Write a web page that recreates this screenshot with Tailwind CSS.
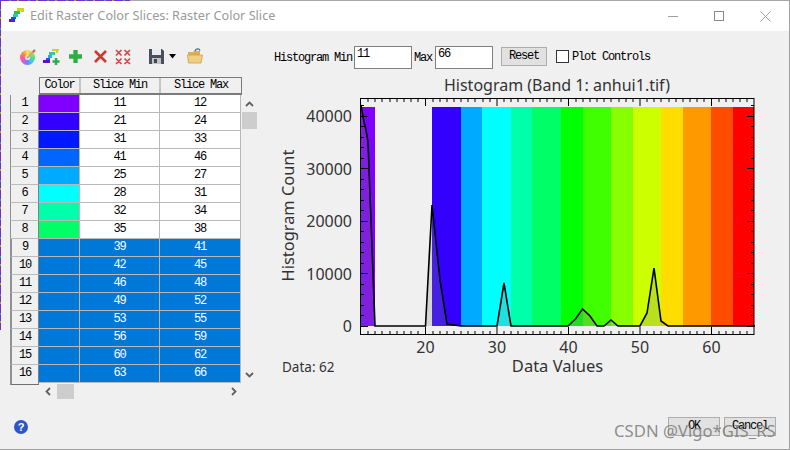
<!DOCTYPE html>
<html>
<head>
<meta charset="utf-8">
<script src="https://cdn.jsdelivr.net/npm/@tailwindcss/browser@4"></script>
</head>
<body class="bg-[#f0f0f0]">
<div class="relative w-[790px] h-[450px] overflow-hidden bg-[#f0f0f0] border-r border-b border-[#a0a0a0] flex flex-col font-['Liberation_Mono',monospace] text-[12px] tracking-[-1.2px] text-black">
  <!-- desktop showing at the window edges -->
  <div class="absolute left-0 top-0 w-px h-[330px] bg-[repeating-linear-gradient(180deg,#7a2bd0_0,#7a2bd0_9px,#3aa0a0_9px,#3aa0a0_11px,#7a2bd0_11px,#7a2bd0_17px,#9ab030_17px,#9ab030_19px)]"></div>
  <div class="absolute left-0 top-0 w-[130px] h-px bg-[repeating-linear-gradient(90deg,#7a2bd0_0,#7a2bd0_9px,#3aa0a0_9px,#3aa0a0_11px,#7a2bd0_11px,#7a2bd0_17px,#9ab030_17px,#9ab030_19px)]"></div>

  <!-- title bar -->
  <div class="h-[31px] shrink-0 bg-white flex items-center pl-[9px] border-t border-[#a8a8a8]">
    <svg width="16" height="16" viewBox="0 0 16 16" class="shrink-0">
      <rect x="8" y="0" width="7" height="3" fill="#c8d820"/><rect x="12" y="2" width="3" height="2" fill="#c8d820"/>
      <rect x="5" y="3" width="6" height="3" fill="#30c040"/>
      <rect x="4" y="6" width="5" height="3" fill="#20c8d8"/>
      <rect x="2" y="9" width="5" height="2" fill="#1850e8"/>
      <rect x="0" y="11" width="6" height="3" fill="#7010d0"/>
    </svg>
    <span class="ml-[5px] font-['Noto_Sans',sans-serif] text-[12.7px] tracking-normal text-[#9a9a9a] whitespace-nowrap">Edit Raster Color Slices: Raster Color Slice</span>
    <div class="ml-auto flex items-center pr-[18px] gap-[35px]">
      <svg width="11" height="11" viewBox="0 0 11 11"><path d="M0 5.5H10" stroke="#a0a0a0" fill="none"/></svg>
      <svg width="11" height="11" viewBox="0 0 11 11"><rect x="0.5" y="0.5" width="9" height="9" stroke="#8a8a8a" fill="none"/></svg>
      <svg width="11" height="11" viewBox="0 0 11 11"><path d="M0.5 0.5L10.5 10.5M10.5 0.5L0.5 10.5" stroke="#a0a0a0" fill="none"/></svg>
    </div>
  </div>

  <div class="flex flex-1 min-h-0">
    <!-- left column -->
    <div class="w-[270px] shrink-0 flex flex-col">
      <!-- toolbar -->
      <div class="h-[46px] shrink-0 flex items-start pt-[18px] pl-[20px]">
        <div class="relative w-[16px] h-[16px]">
          <div class="w-[15px] h-[15px] mt-[1px] rounded-full bg-[conic-gradient(#f8e060,#b0e850,#50e080,#40c8f0,#7080f8,#d060e0,#f86090,#f89040,#f8e060)]"></div>
          <div class="absolute left-[5px] top-[6px] w-[5px] h-[5px] rounded-full bg-white/80"></div>
          <svg class="absolute left-0 top-0" width="17" height="16" viewBox="0 0 17 16"><path d="M7 9L14 2" stroke="#d8a070" stroke-width="1.8" fill="none"/><path d="M13 3L15 1" stroke="#e05050" stroke-width="2" fill="none"/></svg>
        </div>
        <svg class="ml-[7px]" width="18" height="17" viewBox="0 0 18 17">
          <rect x="9" y="0" width="7" height="2" fill="#c8d820"/><rect x="13" y="1" width="2" height="3" fill="#c8d820"/>
          <rect x="6" y="3" width="6" height="3" fill="#30c8a0"/>
          <rect x="5" y="6" width="4" height="3" fill="#20b0e8"/>
          <rect x="3" y="9" width="4" height="2" fill="#1850e8"/>
          <rect x="0" y="11" width="7" height="3" fill="#6010c0"/>
          <path d="M13 9V16M9.5 12.5H16.5" stroke="#30a850" stroke-width="2.4" fill="none"/>
        </svg>
        <svg class="ml-[7px]" width="15" height="15" viewBox="0 0 15 15"><path d="M7.5 1V14M1 7.5H14" stroke="#2fae46" stroke-width="4.4" fill="none"/></svg>
        <svg class="ml-[10px]" width="15" height="15" viewBox="0 0 15 15"><path d="M2 2L13 13M13 2L2 13" stroke="#c83a34" stroke-width="2.6" fill="none"/></svg>
        <svg class="ml-[7px]" width="16" height="16" viewBox="0 0 16 16"><path d="M1 1L6.5 6.5M6.5 1L1 6.5M9.5 1L15 6.5M15 1L9.5 6.5M1 9.5L6.5 15M6.5 9.5L1 15M9.5 9.5L15 15M15 9.5L9.5 15" stroke="#d04848" stroke-width="1.7" fill="none"/></svg>
        <svg class="ml-[18px]" width="15" height="15" viewBox="0 0 15 15"><path d="M0 0H13L15 2V15H0Z" fill="#4a4f5c"/><rect x="3" y="0" width="9" height="6" fill="#e8ecf0"/><rect x="3" y="9" width="9" height="6" fill="#c0c4c8"/><rect x="5" y="10" width="3" height="4" fill="#40444c"/></svg>
        <svg class="ml-[5px] mt-[5px]" width="8" height="5" viewBox="0 0 8 5"><path d="M0 0H7L3.5 4.5Z" fill="#000"/></svg>
        <svg class="ml-[10px] -mt-[1px]" width="16" height="16" viewBox="0 0 16 16"><path d="M1 4H6L7 3H13V15H1Z" fill="#d8b058"/><path d="M0.5 7H15.5L14 15H1.5Z" fill="#f0d080" stroke="#c8a050" stroke-width=".8"/><path d="M8 3C9 0.5 12 0 13 2.5" stroke="#4a6a90" stroke-width="1.4" fill="none"/></svg>
      </div>

      <!-- table + vertical scrollbar -->
      <div class="flex">
        <div class="w-[242px] shrink-0">
          <!-- header -->
          <div class="ml-[39px] flex h-[18px] border-t border-l border-b-2 border-r border-[#7a7a7a] text-center leading-[15px] bg-[#f0f0f0]">
            <div class="w-[41px] border-r-2 border-[#c4c4c4]">Color</div>
            <div class="w-[80px] border-r-2 border-[#c4c4c4]">Slice Min</div>
            <div class="flex-1">Slice Max</div>
          </div>
          <!-- rows -->
          <div class="flex h-[18px] leading-[16px] text-center"><div class="ml-[10px] w-[29px] bg-[#f0f0f0] border-l border-l-[#909090] border-b border-b-[#bcbcbc] border-r border-r-[#808080]">1</div><div class="w-[41px] bg-[#8000ff] border-b border-r border-[#b8b8b8]"></div><div class="w-[80px] bg-white border-b border-r border-[#b8b8b8]">11</div><div class="w-[81px] bg-white border-b border-r border-[#b8b8b8]">12</div></div>
          <div class="flex h-[18px] leading-[16px] text-center"><div class="ml-[10px] w-[29px] bg-[#f0f0f0] border-l border-l-[#909090] border-b border-b-[#bcbcbc] border-r border-r-[#808080]">2</div><div class="w-[41px] bg-[#3300ff] border-b border-r border-[#b8b8b8]"></div><div class="w-[80px] bg-white border-b border-r border-[#b8b8b8]">21</div><div class="w-[81px] bg-white border-b border-r border-[#b8b8b8]">24</div></div>
          <div class="flex h-[18px] leading-[16px] text-center"><div class="ml-[10px] w-[29px] bg-[#f0f0f0] border-l border-l-[#909090] border-b border-b-[#bcbcbc] border-r border-r-[#808080]">3</div><div class="w-[41px] bg-[#0019ff] border-b border-r border-[#b8b8b8]"></div><div class="w-[80px] bg-white border-b border-r border-[#b8b8b8]">31</div><div class="w-[81px] bg-white border-b border-r border-[#b8b8b8]">33</div></div>
          <div class="flex h-[18px] leading-[16px] text-center"><div class="ml-[10px] w-[29px] bg-[#f0f0f0] border-l border-l-[#909090] border-b border-b-[#bcbcbc] border-r border-r-[#808080]">4</div><div class="w-[41px] bg-[#0066ff] border-b border-r border-[#b8b8b8]"></div><div class="w-[80px] bg-white border-b border-r border-[#b8b8b8]">41</div><div class="w-[81px] bg-white border-b border-r border-[#b8b8b8]">46</div></div>
          <div class="flex h-[18px] leading-[16px] text-center"><div class="ml-[10px] w-[29px] bg-[#f0f0f0] border-l border-l-[#909090] border-b border-b-[#bcbcbc] border-r border-r-[#808080]">5</div><div class="w-[41px] bg-[#00aaff] border-b border-r border-[#b8b8b8]"></div><div class="w-[80px] bg-white border-b border-r border-[#b8b8b8]">25</div><div class="w-[81px] bg-white border-b border-r border-[#b8b8b8]">27</div></div>
          <div class="flex h-[18px] leading-[16px] text-center"><div class="ml-[10px] w-[29px] bg-[#f0f0f0] border-l border-l-[#909090] border-b border-b-[#bcbcbc] border-r border-r-[#808080]">6</div><div class="w-[41px] bg-[#00ffff] border-b border-r border-[#b8b8b8]"></div><div class="w-[80px] bg-white border-b border-r border-[#b8b8b8]">28</div><div class="w-[81px] bg-white border-b border-r border-[#b8b8b8]">31</div></div>
          <div class="flex h-[18px] leading-[16px] text-center"><div class="ml-[10px] w-[29px] bg-[#f0f0f0] border-l border-l-[#909090] border-b border-b-[#bcbcbc] border-r border-r-[#808080]">7</div><div class="w-[41px] bg-[#00ffaa] border-b border-r border-[#b8b8b8]"></div><div class="w-[80px] bg-white border-b border-r border-[#b8b8b8]">32</div><div class="w-[81px] bg-white border-b border-r border-[#b8b8b8]">34</div></div>
          <div class="flex h-[18px] leading-[16px] text-center"><div class="ml-[10px] w-[29px] bg-[#f0f0f0] border-l border-l-[#909090] border-b border-b-[#bcbcbc] border-r border-r-[#808080]">8</div><div class="w-[41px] bg-[#00ff66] border-b border-r border-[#b8b8b8]"></div><div class="w-[80px] bg-white border-b border-r border-[#b8b8b8]">35</div><div class="w-[81px] bg-white border-b border-r border-[#b8b8b8]">38</div></div>
          <div class="flex h-[18px] leading-[16px] text-center text-white"><div class="ml-[10px] w-[29px] bg-[#f0f0f0] border-l-2 border-l-[#909090] border-b border-b-[#bcbcbc] border-r border-r-[#808080] text-black">9</div><div class="w-[41px] bg-[#0078d7] border-b border-r border-[#b8b8b8]"></div><div class="w-[80px] bg-[#0078d7] border-b border-r border-[#b8b8b8]">39</div><div class="w-[81px] bg-[#0078d7] border-b border-r border-[#b8b8b8]">41</div></div>
          <div class="flex h-[18px] leading-[16px] text-center text-white"><div class="ml-[10px] w-[29px] bg-[#f0f0f0] border-l-2 border-l-[#909090] border-b border-b-[#bcbcbc] border-r border-r-[#808080] text-black">10</div><div class="w-[41px] bg-[#0078d7] border-b border-r border-[#b8b8b8]"></div><div class="w-[80px] bg-[#0078d7] border-b border-r border-[#b8b8b8]">42</div><div class="w-[81px] bg-[#0078d7] border-b border-r border-[#b8b8b8]">45</div></div>
          <div class="flex h-[18px] leading-[16px] text-center text-white"><div class="ml-[10px] w-[29px] bg-[#f0f0f0] border-l-2 border-l-[#909090] border-b border-b-[#bcbcbc] border-r border-r-[#808080] text-black">11</div><div class="w-[41px] bg-[#0078d7] border-b border-r border-[#b8b8b8]"></div><div class="w-[80px] bg-[#0078d7] border-b border-r border-[#b8b8b8]">46</div><div class="w-[81px] bg-[#0078d7] border-b border-r border-[#b8b8b8]">48</div></div>
          <div class="flex h-[18px] leading-[16px] text-center text-white"><div class="ml-[10px] w-[29px] bg-[#f0f0f0] border-l-2 border-l-[#909090] border-b border-b-[#bcbcbc] border-r border-r-[#808080] text-black">12</div><div class="w-[41px] bg-[#0078d7] border-b border-r border-[#b8b8b8]"></div><div class="w-[80px] bg-[#0078d7] border-b border-r border-[#b8b8b8]">49</div><div class="w-[81px] bg-[#0078d7] border-b border-r border-[#b8b8b8]">52</div></div>
          <div class="flex h-[18px] leading-[16px] text-center text-white"><div class="ml-[10px] w-[29px] bg-[#f0f0f0] border-l-2 border-l-[#909090] border-b border-b-[#bcbcbc] border-r border-r-[#808080] text-black">13</div><div class="w-[41px] bg-[#0078d7] border-b border-r border-[#b8b8b8]"></div><div class="w-[80px] bg-[#0078d7] border-b border-r border-[#b8b8b8]">53</div><div class="w-[81px] bg-[#0078d7] border-b border-r border-[#b8b8b8]">55</div></div>
          <div class="flex h-[18px] leading-[16px] text-center text-white"><div class="ml-[10px] w-[29px] bg-[#f0f0f0] border-l-2 border-l-[#909090] border-b border-b-[#bcbcbc] border-r border-r-[#808080] text-black">14</div><div class="w-[41px] bg-[#0078d7] border-b border-r border-[#b8b8b8]"></div><div class="w-[80px] bg-[#0078d7] border-b border-r border-[#b8b8b8]">56</div><div class="w-[81px] bg-[#0078d7] border-b border-r border-[#b8b8b8]">59</div></div>
          <div class="flex h-[18px] leading-[16px] text-center text-white"><div class="ml-[10px] w-[29px] bg-[#f0f0f0] border-l-2 border-l-[#909090] border-b border-b-[#bcbcbc] border-r border-r-[#808080] text-black">15</div><div class="w-[41px] bg-[#0078d7] border-b border-r border-[#b8b8b8]"></div><div class="w-[80px] bg-[#0078d7] border-b border-r border-[#b8b8b8]">60</div><div class="w-[81px] bg-[#0078d7] border-b border-r border-[#b8b8b8]">62</div></div>
          <div class="flex h-[18px] leading-[16px] text-center text-white"><div class="ml-[10px] w-[29px] h-[20px] bg-[#f0f0f0] border-l-2 border-l-[#909090] border-b border-b-[#707070] border-r border-r-[#808080] text-black">16</div><div class="w-[41px] bg-[#0078d7] border-b border-r border-[#b8b8b8]"></div><div class="w-[80px] bg-[#0078d7] border-b border-r border-[#b8b8b8]">63</div><div class="w-[81px] bg-[#0078d7] border-b border-r border-[#b8b8b8]">66</div></div>
        </div>
        <!-- vertical scrollbar -->
        <div class="w-[15px] mt-[18px] flex flex-col items-center">
          <div class="h-[17px] flex items-center"><svg width="9" height="6" viewBox="0 0 9 6"><path d="M1 5L4.5 1.5L8 5" stroke="#606060" stroke-width="1.8" fill="none"/></svg></div>
          <div class="w-[15px] h-[17px] bg-[#cdcdcd]"></div>
          <div class="flex-1"></div>
          <div class="h-[17px] flex items-center"><svg width="9" height="6" viewBox="0 0 9 6"><path d="M1 1L4.5 4.5L8 1" stroke="#606060" stroke-width="1.8" fill="none"/></svg></div>
        </div>
      </div>
      <!-- horizontal scrollbar -->
      <div class="ml-[45px] w-[192px] h-[15px] mt-[1px] flex items-center">
        <svg width="6" height="9" viewBox="0 0 6 9"><path d="M5 1L1.5 4.5L5 8" stroke="#606060" stroke-width="1.8" fill="none"/></svg>
        <div class="ml-[6px] w-[17px] h-[15px] bg-[#cdcdcd]"></div>
        <div class="flex-1"></div>
        <svg width="6" height="9" viewBox="0 0 6 9"><path d="M1 1L4.5 4.5L1 8" stroke="#606060" stroke-width="1.8" fill="none"/></svg>
      </div>
      <!-- help -->
      <div class="ml-[14px] mt-[21px] w-[14px] h-[14px] rounded-full bg-[#2d55c8] flex items-center justify-center font-['Liberation_Sans',sans-serif] font-bold text-[11px] tracking-normal text-white">?</div>
    </div>

    <!-- right column -->
    <div class="flex-1 flex flex-col min-w-0">
      <div class="h-[23px] mt-[15px] shrink-0 flex items-center pl-[4px] whitespace-nowrap">
        <span>Histogram Min</span>
        <div class="ml-[2px] w-[58px] h-[23px] bg-white border border-[#808080] pl-[2px] leading-[15px]">11</div>
        <span class="ml-[2px]">Max</span>
        <div class="ml-[3px] w-[58px] h-[23px] bg-white border border-[#808080] pl-[2px] leading-[15px]">66</div>
        <div class="ml-[8px] w-[46px] h-[19px] -mt-[3px] bg-[#e1e1e1] border border-[#adadad] text-center leading-[16px]">Reset</div>
        <div class="ml-[9px] w-[13px] h-[13px] -mt-[2px] bg-white border border-[#333]"></div>
        <span class="ml-[3px] -mt-[2px]">Plot Controls</span>
      </div>
      <svg width="520" height="315" viewBox="270 70 520 315" class="mt-[1px] shrink-0 block font-['Noto_Sans',sans-serif] tracking-normal">
        <!-- bands -->
        <rect x="361" y="107" width="14" height="219" fill="#8000ff"/>
        <rect x="432" y="107" width="29" height="219" fill="#3300ff"/>
        <rect x="461" y="107" width="21" height="219" fill="#00aaff"/>
        <rect x="482" y="107" width="29" height="219" fill="#00ffff"/>
        <rect x="511" y="107" width="21" height="219" fill="#00ffaa"/>
        <rect x="532" y="107" width="29" height="219" fill="#00ff66"/>
        <rect x="561" y="107" width="22" height="219" fill="#00ff00"/>
        <rect x="583" y="107" width="28" height="219" fill="#40ff00"/>
        <rect x="611" y="107" width="22" height="219" fill="#88ff00"/>
        <rect x="633" y="107" width="28" height="219" fill="#ccff00"/>
        <rect x="661" y="107" width="22" height="219" fill="#ffdd00"/>
        <rect x="683" y="107" width="28" height="219" fill="#ff9900"/>
        <rect x="711" y="107" width="22" height="219" fill="#ff4c00"/>
        <rect x="733" y="107" width="21" height="219" fill="#ff0000"/>
        <!-- histogram -->
        <path d="M361 326V105L364 122L366 130L368 142L375 326H425.5L432 205L440 280L447 324L454 325L461 326H497L504 283L511 326H568L575.5 319L582.5 309L590 316L597 326H604L611 320L618 326H640L647 313L654 268L661 321L668 326Z" fill="#808080" fill-opacity=".25" stroke="none"/>
        <path d="M361 105L364 122L366 130L368 142L375 326H425.5L432 205L440 280L447 324L454 325L461 326H497L504 283L511 326H568L575.5 319L582.5 309L590 316L597 326H604L611 320L618 326H640L647 313L654 268L661 321L668 326H755" fill="none" stroke="#000" stroke-width="1.6"/>
        <!-- frame -->
        <rect x="360.5" y="98.5" width="393.5" height="236" fill="none" stroke="#000"/>
        <!-- major x ticks -->
        <path d="M425.5 99v7M497 99v7M568.5 99v7M640 99v7M711.5 99v7M425.5 334v-7M497 334v-7M568.5 334v-7M640 334v-7M711.5 334v-7" stroke="#000" fill="none"/>
        <!-- minor x ticks -->
        <path d="M368 99v3M375 99v3M382 99v3M390 99v3M397 99v3M404 99v3M411 99v3M418 99v3M433 99v3M440 99v3M447 99v3M454 99v3M461 99v3M468 99v3M475 99v3M483 99v3M490 99v3M504 99v3M511 99v3M518 99v3M526 99v3M533 99v3M540 99v3M547 99v3M554 99v3M561 99v3M576 99v3M583 99v3M590 99v3M597 99v3M604 99v3M611 99v3M619 99v3M626 99v3M633 99v3M647 99v3M654 99v3M661 99v3M669 99v3M676 99v3M683 99v3M690 99v3M697 99v3M704 99v3M719 99v3M726 99v3M733 99v3M740 99v3M747 99v3M368 334v-3M375 334v-3M382 334v-3M390 334v-3M397 334v-3M404 334v-3M411 334v-3M418 334v-3M433 334v-3M440 334v-3M447 334v-3M454 334v-3M461 334v-3M468 334v-3M475 334v-3M483 334v-3M490 334v-3M504 334v-3M511 334v-3M518 334v-3M526 334v-3M533 334v-3M540 334v-3M547 334v-3M554 334v-3M561 334v-3M576 334v-3M583 334v-3M590 334v-3M597 334v-3M604 334v-3M611 334v-3M619 334v-3M626 334v-3M633 334v-3M647 334v-3M654 334v-3M661 334v-3M669 334v-3M676 334v-3M683 334v-3M690 334v-3M697 334v-3M704 334v-3M719 334v-3M726 334v-3M733 334v-3M740 334v-3M747 334v-3" stroke="#000" fill="none"/>
        <!-- y ticks -->
        <path d="M361 326.5h7M361 273.5h7M361 221.5h7M361 168.5h7M361 116.5h7M754 326.5h-7M754 273.5h-7M754 221.5h-7M754 168.5h-7M754 116.5h-7" stroke="#000" fill="none"/>
        <path d="M361 315.5h3M361 305.5h3M361 294.5h3M361 284.5h3M361 263.5h3M361 252.5h3M361 242.5h3M361 231.5h3M361 210.5h3M361 200.5h3M361 189.5h3M361 179.5h3M361 158.5h3M361 147.5h3M361 137.5h3M361 126.5h3M361 105.5h3M754 315.5h-3M754 305.5h-3M754 294.5h-3M754 284.5h-3M754 263.5h-3M754 252.5h-3M754 242.5h-3M754 231.5h-3M754 210.5h-3M754 200.5h-3M754 189.5h-3M754 179.5h-3M754 158.5h-3M754 147.5h-3M754 137.5h-3M754 126.5h-3M754 105.5h-3" stroke="#000" fill="none"/>
        <!-- labels -->
        <g fill="#333" font-size="16">
          <text x="557" y="91" text-anchor="middle">Histogram (Band 1: anhui1.tif)</text>
          <text x="352" y="122" text-anchor="end">40000</text>
          <text x="352" y="175" text-anchor="end">30000</text>
          <text x="352" y="227" text-anchor="end">20000</text>
          <text x="352" y="280" text-anchor="end">10000</text>
          <text x="352" y="332" text-anchor="end">0</text>
          <text x="425.5" y="353" text-anchor="middle">20</text>
          <text x="497" y="353" text-anchor="middle">30</text>
          <text x="568.5" y="353" text-anchor="middle">40</text>
          <text x="640" y="353" text-anchor="middle">50</text>
          <text x="711.5" y="353" text-anchor="middle">60</text>
          <text x="557.5" y="372" text-anchor="middle" font-size="16.5">Data Values</text>
          <text x="294" y="215.5" text-anchor="middle" font-size="16.4" transform="rotate(-90 294 215.5)">Histogram Count</text>
          <text x="282" y="372" font-size="13.5">Data: 62</text>
        </g>
      </svg>
      <div class="mt-[32px] flex pl-[398px] gap-[4px] shrink-0">
        <div class="w-[52px] h-[19px] bg-[#e1e1e1] border border-[#adadad] text-center leading-[17px]">OK</div>
        <div class="w-[52px] h-[19px] bg-[#e1e1e1] border border-[#adadad] text-center leading-[17px]">Cancel</div>
      </div>
    </div>
  </div>
  <!-- watermark -->
  <div class="absolute left-[614px] top-[420px] font-['Noto_Sans',sans-serif] text-[16.7px] tracking-normal leading-[22px] text-[#808080]/90 whitespace-nowrap">CSDN @Vigo*GIS_RS</div>
</div>
</body>
</html>
